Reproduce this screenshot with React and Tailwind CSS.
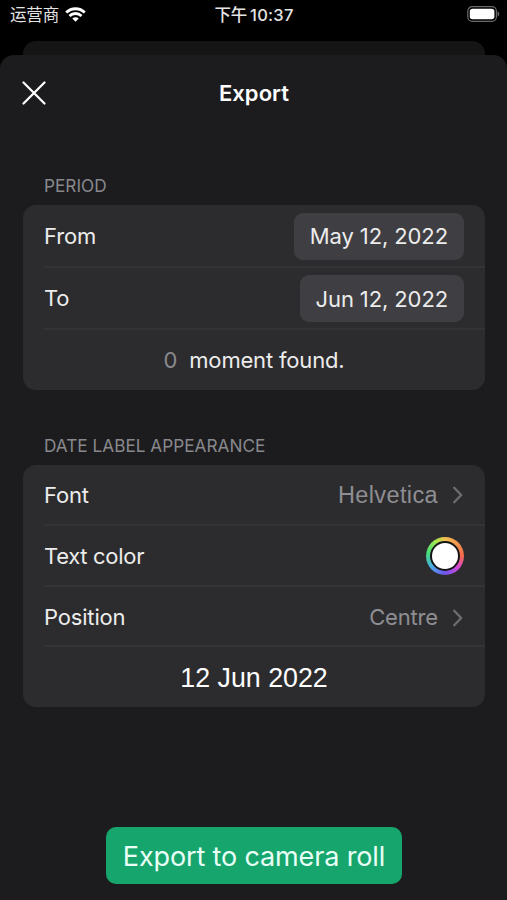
const StatusBar = () => {
    return (
        <div className="flex h-[30px] items-center justify-between pl-[10px] pr-[7px] text-[#e4e4e4]">
            <div className="flex w-[120px] items-center gap-[6px]">
                <span className="text-[16.5px] leading-none">运营商</span>
                <svg width="21" height="15" viewBox="0 0 21 15" className="-mt-px" fill="none" stroke="#fff" strokeWidth="2.8">
                    <path d="M1.2 5.6a13.2 13.2 0 0 1 18.6 0" />
                    <path d="M4.5 9a8.5 8.5 0 0 1 12 0" />
                    <path d="M10.5 14.8l-3.2-3.2a4.5 4.5 0 0 1 6.4 0z" fill="#fff" stroke="none" />
                </svg>
            </div>
            <div className="flex items-center gap-[3px] text-[16.5px] font-medium leading-none">
                <span>下午</span>
                <span className="tracking-[0.015em]">10:37</span>
            </div>
            <div className="flex w-[122px] justify-end">
                <svg width="34" height="16" viewBox="0 0 34 16" className="-mt-[2px]" fill="none">
                    <rect x="1.8" y="0.7" width="28.6" height="14.6" rx="4.5" stroke="#6a6a6a" strokeWidth="1.2" />
                    <rect x="3.8" y="2.7" width="24.6" height="10.6" rx="2.8" fill="#fff" />
                    <path d="M31.6 5.3c2.2.8 2.2 4.6 0 5.4z" fill="#6a6a6a" />
                </svg>
            </div>
        </div>
    );
};

const Chevron = () => {
    return (
        <svg width="12" height="20" viewBox="0 0 12 20" fill="none" stroke="#6d6d71" strokeWidth="2.3" strokeLinecap="round" strokeLinejoin="round">
            <path d="M2.2 2.8l7 7.2-7 7.2" />
        </svg>
    );
};

const Section = ({ title, className, children }) => {
    return (
        <section className={className}>
            <h2 className="mb-[9px] ml-[21px] h-5 text-[17.2px] leading-5 tracking-[0.001em] text-[#89898d]">{title}</h2>
            <div className="overflow-hidden rounded-[13px] bg-[#2c2c2e]">{children}</div>
        </section>
    );
};

const Row = ({ label, className, children }) => {
    return (
        <div className={`ml-[21px] flex items-center justify-between border-b-2 border-[#343437] pr-[21px] ${className}`}>
            <span>{label}</span>
            {children}
        </div>
    );
};

const DateButton = ({ children }) => {
    return (
        <button className="h-[47px] rounded-[9px] bg-[#3f3e43] px-4 pt-px tracking-[-0.005em]">
            {children}
        </button>
    );
};

const ColorWell = () => {
    return (
        <button
            aria-label="Text color"
            className="flex size-[38px] items-center justify-center rounded-full bg-[conic-gradient(#f3c04f,#f3694a_25%,#d848d8_36%,#7054ee_50%,#4aa9e8_64%,#45dd78_78%,#a5e84e_91%,#f3c04f)]"
        >
            <span className="flex size-[30px] items-center justify-center rounded-full bg-[#151517]">
                <span className="size-[26px] rounded-full bg-white" />
            </span>
        </button>
    );
};

const App = () => {
    return (
        <div className="flex h-[900px] w-[507px] flex-col overflow-hidden bg-black font-['Inter','Noto_Sans_CJK_SC',sans-serif] text-[22px] tracking-[-0.008em] text-[#ececec]">
            <StatusBar />
            <div className="mx-[22.5px] mt-[11px] h-[14px] shrink-0 rounded-t-[13px] bg-[#151515]" />
            <main className="flex flex-1 flex-col rounded-t-[14px] bg-[#1c1c1e] pl-[23px] pr-[22px]">
                <header className="grid h-[76px] grid-cols-3 items-center text-white">
                    <button aria-label="Close" className="-ml-px w-6">
                        <svg width="24" height="24" viewBox="0 0 24 24" fill="none" stroke="currentColor" strokeWidth="2.2" strokeLinecap="round">
                            <path d="M1.5 1.5l21 21M22.5 1.5l-21 21" />
                        </svg>
                    </button>
                    <h1 className="text-center font-semibold tracking-[0.002em]">Export</h1>
                </header>

                <Section title="PERIOD" className="mt-[45px]">
                    <Row label="From" className="h-[63px] pt-px">
                        <DateButton>May 12, 2022</DateButton>
                    </Row>
                    <Row label="To" className="h-[62px] pt-px">
                        <DateButton>Jun 12, 2022</DateButton>
                    </Row>
                    <div className="flex h-[60px] items-center justify-center gap-3">
                        <span className="text-[#89898d]">0</span>
                        <span>moment found.</span>
                    </div>
                </Section>

                <Section title="DATE LABEL APPEARANCE" className="mt-[46px]">
                    <Row label="Font" className="h-[61px] pt-px">
                        <span className="flex items-center gap-[14px] text-[#8e8e93]">
                            <span className="pt-[2px] font-['Liberation_Sans',sans-serif] text-[23.5px] tracking-[0.016em]">Helvetica</span>
                            <Chevron />
                        </span>
                    </Row>
                    <Row label="Text color" className="h-[61px] pt-px tracking-[-0.014em]">
                        <ColorWell />
                    </Row>
                    <Row label="Position" className="h-[60px] pt-[3px]">
                        <span className="flex items-center gap-[14px] text-[#8e8e93]">
                            <span>Centre</span>
                            <Chevron />
                        </span>
                    </Row>
                    <div className="flex h-[60px] items-center justify-center pt-[2px] font-['Liberation_Sans',sans-serif] text-[26.8px] tracking-normal text-white">
                        12 Jun 2022
                    </div>
                </Section>

                <button className="mx-auto mt-[120px] h-[57px] w-[296px] rounded-[10px] bg-[#17a56e] pt-[3px] text-[27px] tracking-[-0.005em] text-[#e8fff6]">
                    Export to camera roll
                </button>
            </main>
        </div>
    );
};

export default App;
